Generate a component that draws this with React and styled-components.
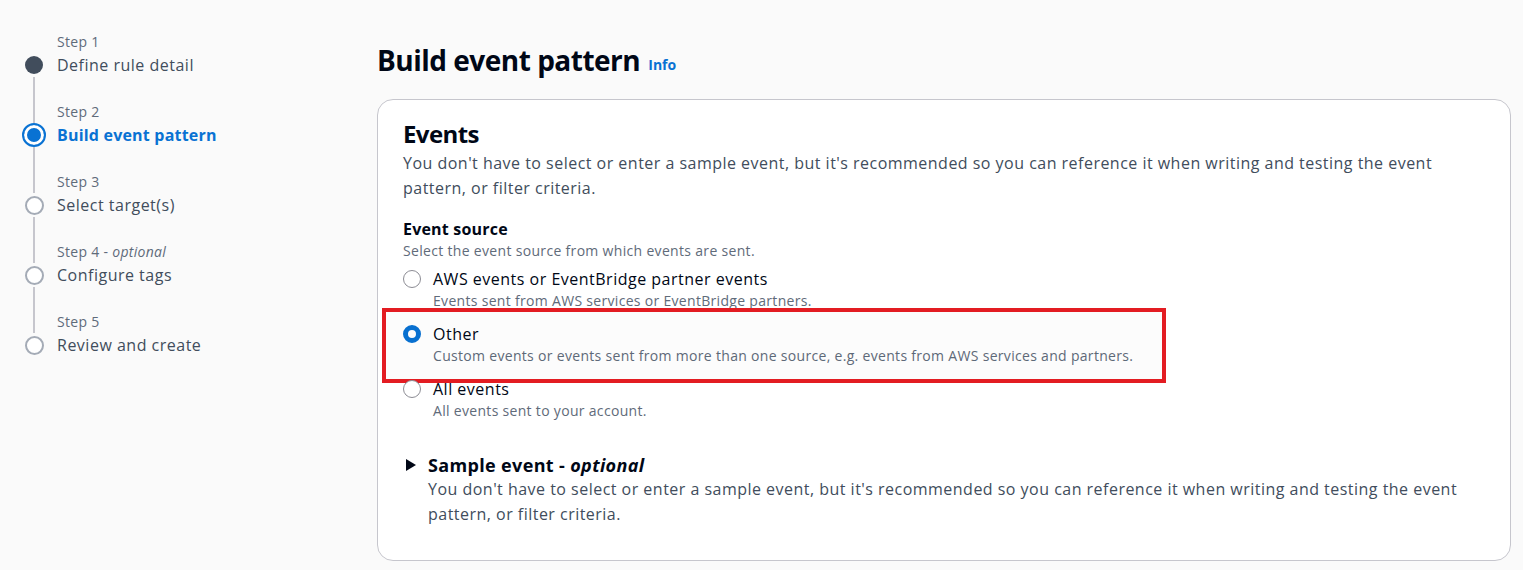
import React from 'react';
import styled, { createGlobalStyle } from 'styled-components';

const GlobalStyle = createGlobalStyle`
  body {
    margin: 0;
    background: #fafafa;
    font-family: 'Open Sans', 'Noto Sans', sans-serif;
    color: #414d5c;
  }
`;

const Page = styled.div`
  display: flex;
  min-height: 570px;
`;

const Nav = styled.nav`
  width: 355px;
  padding: 30px 0 0 22px;
  box-sizing: border-box;
`;

const StepItem = styled.div`
  display: grid;
  grid-template-columns: 24px 1fr;
  column-gap: 11px;
`;

const Rail = styled.div`
  display: flex;
  justify-content: center;
  &::before {
    content: '';
    display: ${p => (p.first ? 'none' : 'block')};
    width: 2px;
    background: #c6c6cd;
  }
`;

const StepLabel = styled.div`
  padding-top: ${p => (p.first ? '0' : '23px')};
  font-size: 14px;
  line-height: 23px;
  letter-spacing: 0.3px;
  color: #5f6b7a;
  em {
    font-style: italic;
  }
`;

const Dot = styled.div`
  display: flex;
  align-items: center;
  justify-content: center;
  height: 24px;
  span {
    box-sizing: border-box;
    border-radius: 50%;
    ${p =>
      p.state === 'done'
        ? 'width: 18px; height: 18px; background: #414d5c;'
        : p.state === 'active'
        ? 'width: 24px; height: 24px; border: 2px solid #0972d3; background: #fff; box-shadow: inset 0 0 0 3px #fff, inset 0 0 0 12px #0972d3;'
        : 'width: 19px; height: 19px; border: 2.5px solid #a4abb6; background: #fff;'}
  }
`;

const StepTitle = styled.div`
  font-size: 16px;
  line-height: 24px;
  letter-spacing: ${p => (p.active ? '0.2px' : '0.5px')};
  color: ${p => (p.active ? '#0972d3' : '#414d5c')};
  font-weight: ${p => (p.active ? 700 : 400)};
`;

const Main = styled.main`
  flex: 1;
  padding: 41px 12px 10px 22px;
`;

const TitleRow = styled.div`
  display: flex;
  align-items: baseline;
  gap: 8px;
  margin-bottom: 20px;
`;

const PageTitle = styled.h1`
  margin: 0;
  font-size: 28px;
  line-height: 38px;
  font-weight: 700;
  color: #000716;
  letter-spacing: -0.5px;
`;

const InfoLink = styled.a`
  font-size: 14px;
  font-weight: 700;
  color: #0972d3;
  text-decoration: none;
  position: relative;
  top: -1px;
`;

const Card = styled.section`
  background: #fff;
  border: 1px solid #c6c6cd;
  border-radius: 16px;
  padding: 19px 24px 33px 25px;
`;

const CardTitle = styled.h2`
  margin: 0;
  font-size: 24px;
  line-height: 30px;
  font-weight: 700;
  letter-spacing: -0.6px;
  color: #000716;
`;

const Text = styled.p`
  margin: ${p => (p.gap ? '2px' : '0')} 0 0;
  font-size: 16px;
  line-height: 25px;
  letter-spacing: 0.48px;
  color: #414d5c;
  max-width: 1045px;
`;

const Field = styled.div`
  margin-top: 16px;
`;

const FieldLabel = styled.div`
  font-size: 16px;
  line-height: 24px;
  font-weight: 700;
  letter-spacing: 0.2px;
  color: #000716;
`;

const FieldHint = styled.div`
  font-size: 14px;
  line-height: 20px;
  letter-spacing: 0.32px;
  color: #5f6b7a;
  margin-bottom: 6px;
`;

const RadioList = styled.div`
  display: flex;
  flex-direction: column;
  gap: 11px;
`;

const RadioOption = styled.label`
  position: relative;
  display: grid;
  grid-template-columns: 18px 1fr;
  column-gap: 12px;
`;

const RadioMark = styled.span`
  box-sizing: border-box;
  width: 18px;
  height: 18px;
  margin-top: 3px;
  border-radius: 50%;
  background: #fff;
  border: ${p => (p.checked ? '5px solid #0972d3' : '1.5px solid #8c8c94')};
`;

const RadioText = styled.div`
  font-size: 16px;
  line-height: 24px;
  letter-spacing: 0.5px;
  color: #000716;
`;

const RadioDesc = styled.div`
  font-size: 14px;
  line-height: 20px;
  letter-spacing: 0.31px;
  color: #5f6b7a;
`;

const Highlight = styled.div`
  position: absolute;
  left: -21px;
  top: -14px;
  width: 784px;
  height: 75px;
  box-sizing: border-box;
  border: 4px solid #e31c22;
  background: rgba(0, 0, 0, 0.012);
  pointer-events: none;
`;

const Expandable = styled.div`
  margin-top: 32px;
  display: grid;
  grid-template-columns: 16px 1fr;
  column-gap: 9px;
`;

const Caret = styled.svg`
  margin-top: 6px;
  margin-left: 3px;
`;

const ExpandTitle = styled.div`
  font-size: 18px;
  line-height: 24px;
  font-weight: 700;
  letter-spacing: 0.35px;
  color: #000716;
  em {
    font-style: italic;
  }
`;

const steps = [
  { label: 'Step 1', title: 'Define rule detail', state: 'done' },
  { label: 'Step 2', title: 'Build event pattern', state: 'active' },
  { label: 'Step 3', title: 'Select target(s)', state: 'todo' },
  { label: 'Step 4', optional: true, title: 'Configure tags', state: 'todo' },
  { label: 'Step 5', title: 'Review and create', state: 'todo' },
];

const sources = [
  {
    title: 'AWS events or EventBridge partner events',
    desc: 'Events sent from AWS services or EventBridge partners.',
  },
  {
    title: 'Other',
    desc: 'Custom events or events sent from more than one source, e.g. events from AWS services and partners.',
    checked: true,
  },
  { title: 'All events', desc: 'All events sent to your account.' },
];

const App = () => {
  const hint =
    "You don't have to select or enter a sample event, but it's recommended so you can reference it when writing and testing the event pattern, or filter criteria.";

  return (
    <>
      <GlobalStyle />
      <Page>
        <Nav>
          {steps.map((s, i) => (
            <StepItem key={s.label}>
              <Rail first={i === 0} />
              <StepLabel first={i === 0}>
                {s.label}
                {s.optional && (
                  <>
                    {' - '}
                    <em>optional</em>
                  </>
                )}
              </StepLabel>
              <Dot state={s.state}>
                <span />
              </Dot>
              <StepTitle active={s.state === 'active'}>{s.title}</StepTitle>
            </StepItem>
          ))}
        </Nav>

        <Main>
          <TitleRow>
            <PageTitle>Build event pattern</PageTitle>
            <InfoLink href="#">Info</InfoLink>
          </TitleRow>

          <Card>
            <CardTitle>Events</CardTitle>
            <Text gap>{hint}</Text>

            <Field>
              <FieldLabel>Event source</FieldLabel>
              <FieldHint>Select the event source from which events are sent.</FieldHint>
              <RadioList>
                {sources.map(src => (
                  <RadioOption key={src.title}>
                    <RadioMark checked={src.checked} />
                    <div>
                      <RadioText>{src.title}</RadioText>
                      <RadioDesc>{src.desc}</RadioDesc>
                    </div>
                    {src.checked && <Highlight />}
                  </RadioOption>
                ))}
              </RadioList>
            </Field>

            <Expandable>
              <Caret width="10" height="12" viewBox="0 0 10 12">
                <path d="M0 0 L10 6 L0 12 Z" fill="#000716" />
              </Caret>
              <div>
                <ExpandTitle>
                  Sample event - <em>optional</em>
                </ExpandTitle>
                <Text>{hint}</Text>
              </div>
            </Expandable>
          </Card>
        </Main>
      </Page>
    </>
  );
};

export default App;
